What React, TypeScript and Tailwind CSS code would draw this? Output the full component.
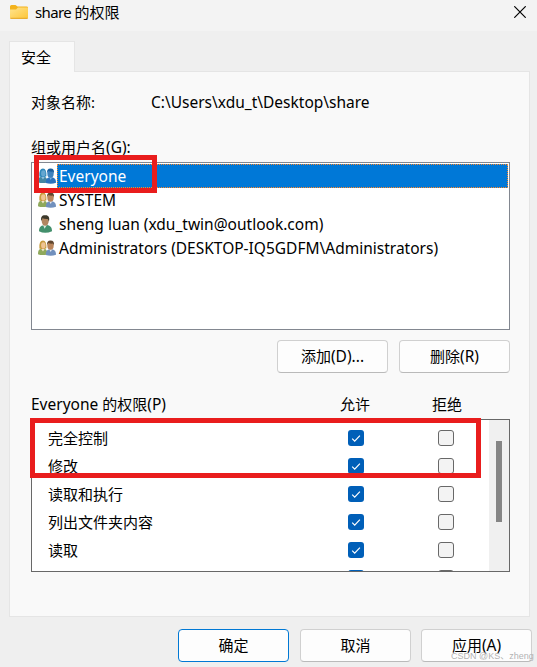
import React, { useState } from 'react';
import clsx from 'clsx';

interface Principal {
  name: string;
  kind: 'group' | 'user';
}

const principals: Principal[] = [
  { name: 'Everyone', kind: 'group' },
  { name: 'SYSTEM', kind: 'group' },
  { name: 'sheng luan (xdu_twin@outlook.com)', kind: 'user' },
  { name: 'Administrators (DESKTOP-IQ5GDFM\\Administrators)', kind: 'group' }
];

// the last row is scrolled almost out of view
const permissions = ['完全控制', '修改', '读取和执行', '列出文件夹内容', '读取', ''];

const FolderIcon = () => (
  <svg width="18" height="14" viewBox="0 0 18 14">
    <defs>
      <linearGradient id="folder" x1="0" y1="0" x2="1" y2="1">
        <stop offset="0" stopColor="#ffe48f" />
        <stop offset="1" stopColor="#fdc536" />
      </linearGradient>
    </defs>
    <path d="M0 1.5Q0 0 1.5 0H5.5L7.5 1.6H16.5Q18 1.6 18 3V6H0Z" fill="#f3b21b" />
    <path d="M0 4.4H6L8 2.6H17Q18 2.6 18 3.6V12.6Q18 14 16.6 14H1.4Q0 14 0 12.6Z" fill="url(#folder)" />
    <path d="M.4 13.3H17.6" stroke="#e3a52c" strokeWidth="1" />
  </svg>
);

const GroupIcon = ({ selected }: { selected: boolean }) => (
  <svg width="18" height="16" viewBox="0 0 18 16">
    <path d="M0 14.2C0 10 1.5 8.7 4.5 8.5C8 8.4 9.4 10.5 9.4 14.4Q4 15.8 0 14.2Z" fill={selected ? '#4387a3' : '#8fa95c'} />
    <path d="M3 8.8L5 11.5L6.8 8.8Z" fill={selected ? '#8dbfe0' : '#f2e3cb'} />
    <path d="M1.4 8.4Q.8 .6 5 .6Q8.7 .6 8.4 8.2L6.6 9H3Z" fill={selected ? '#2f88ba' : '#c79b3e'} />
    <ellipse cx="5.3" cy="5.4" rx="2.2" ry="3.1" fill={selected ? '#65a7d0' : '#efc493'} />
    <path d="M7.8 15C7.8 10.7 9.5 9.4 12.6 9.3C16.2 9.3 18 11 18 14.8Q13 16.4 7.8 15Z" fill={selected ? '#2b73bd' : '#7190bd'} />
    <path d="M11.2 9.3L12.7 12L14.2 9.3Z" fill={selected ? '#79b1e0' : '#e4e9ee'} />
    <ellipse cx="12.5" cy="5.4" rx="3.2" ry="4.3" fill={selected ? '#3d82bd' : '#b9855b'} />
    <path d="M9.2 5C8.6 1.9 10.2 .4 12.6 .5C15.3 .5 16.5 2.3 15.8 5.2L14.9 3.6Q12 3.8 10.2 3Z" fill={selected ? '#195e9d' : '#60462e'} />
  </svg>
);

const UserIcon = () => (
  <svg width="16" height="18" viewBox="0 0 16 18">
    <path d="M1 16.2C1 11.5 3.4 10.2 7.4 10C11.7 10 14 11.8 14 16.2Q7 19.2 1 16.2Z" fill="#43906c" />
    <path d="M5 9.8L6.5 13.8L9 9.8Z" fill="#dcebe2" />
    <ellipse cx="7.2" cy="6" rx="3.5" ry="4.8" fill="#b18660" />
    <path d="M3.4 6C2.3 2 4.2 0 7.2 .2C10.7 0 12 2.7 10.9 6.6L9.8 4Q6 4.2 4.6 3.2Z" fill="#3d3a2c" />
  </svg>
);

const Checkbox = ({ checked }: { checked: boolean }) =>
  checked ? (
    <div className="w-4 h-4 rounded-[3px] bg-[#005fb8] flex items-center justify-center">
      <svg width="16" height="16" viewBox="0 0 16 16" fill="none" stroke="#fff" strokeWidth="1.2">
        <path d="M4.2 8.6L6.7 11.1L11.9 5.6" />
      </svg>
    </div>
  ) : (
    <div className="w-4 h-4 rounded-[3px] border border-[#686868] bg-[#f3f3f3]" />
  );

interface DialogButtonProps {
  label: string;
  accessKey?: string;
  primary?: boolean;
}

const DialogButton: React.FC<DialogButtonProps> = ({ label, accessKey, primary }) => (
  <button
    className={clsx(
      'w-[111px] h-[33px] shrink-0 rounded-[4px] border bg-[#fdfdfd] pb-px',
      primary ? 'border-[#0078d4]' : 'border-[#d0d0d0] border-b-[#bababa]'
    )}
  >
    {label}
    {accessKey && <span className="text-[15.5px]">{accessKey}</span>}
  </button>
);

const App: React.FC = () => {
  const [selected, setSelected] = useState('Everyone');

  return (
    <div className="relative w-[537px] h-[667px] overflow-hidden bg-[#efefef] text-black text-[15px] leading-5 font-['Noto_Sans','Noto_Sans_CJK_SC',sans-serif]">
      <header className="h-[31px] bg-[#f3f3f3] flex items-start pl-2.5 pr-[11px]">
        <div className="mt-[5px]">
          <FolderIcon />
        </div>
        <h1 className="ml-[7px] mt-0.5">
          <span className="tracking-[-0.6px]">share </span>的权限
        </h1>
        <svg className="ml-auto mt-[6px]" width="12" height="12" viewBox="0 0 12 12" stroke="#000" strokeWidth="1.2">
          <path d="M.3 .3L11.7 11.7M11.7 .3L.3 11.7" />
        </svg>
      </header>

      <div className="pt-2.5 pl-[9px]">
        <div className="relative z-10 w-[66px] h-[31px] bg-[#f9f9f9] border border-b-0 border-[#e5e5e5] pl-[11px] pt-[5px]">安全</div>
        <main className="-mt-px w-[521px] h-[546px] bg-[#f9f9f9] border border-[#e5e5e5] pl-[21px] pt-5">
          <div className="flex h-5">
            <span className="w-[120px]">对象名称:</span>
            <span className="text-[15.5px]">C:\Users\xdu_t\Desktop\share</span>
          </div>

          <div className="mt-[25px] h-5">
            组或用户名<span className="text-[15.5px]">(G):</span>
          </div>

          <div className="relative mt-[5px] w-[479px] h-[168px] border border-[#828790] bg-white pt-px pl-[6px] pr-px">
            {principals.map((p) => (
              <div key={p.name} className="flex h-6" onClick={() => setSelected(p.name)}>
                <div className={clsx('w-[19px] shrink-0', p.kind === 'user' ? 'pt-[3px]' : 'pt-1')}>
                  {p.kind === 'user' ? <UserIcon /> : <GroupIcon selected={p.name === selected} />}
                </div>
                <div
                  className={clsx(
                    'flex-1 pl-px pt-px border border-dotted whitespace-nowrap text-[15.5px]',
                    p.name === selected ? 'bg-[#0078d7] text-white border-[#ff8728]' : 'border-transparent'
                  )}
                >
                  {p.name}
                </div>
              </div>
            ))}
            <div className="absolute left-[2px] top-[-8px] w-[123px] h-[38px] border-5 border-[#e91d1d]" />
          </div>

          <div className="mt-2.5 w-[479px] flex justify-end gap-[11px]">
            <DialogButton label="添加" accessKey="(D)..." />
            <DialogButton label="删除" accessKey="(R)" />
          </div>

          <div className="mt-[21px] flex h-5">
            <span className="w-[309px]">
              <span className="text-[15.5px]">Everyone </span>的权限<span className="text-[15.5px]">(P)</span>
            </span>
            <span className="w-[92px]">允许</span>
            <span>拒绝</span>
          </div>

          <div className="relative mt-[5px] w-[479px] h-[153px]">
            <div className="flex h-full border border-[#686868] bg-white overflow-hidden">
              <div className="w-[457px] pt-1">
                {permissions.map((name) => (
                  <div key={name} className="flex items-center h-7 pl-4">
                    <span className="w-[300px]">{name}</span>
                    <div className="w-[90px]">
                      <Checkbox checked />
                    </div>
                    <Checkbox checked={false} />
                  </div>
                ))}
              </div>
              <div className="flex-1 bg-[#f0f0f0] pt-[21px] pl-[7px]">
                <div className="w-1.5 h-[81px] bg-[#858585]" />
              </div>
            </div>
            <div className="absolute -left-px -top-px w-[451px] h-[60px] border-5 border-[#e91d1d]" />
          </div>
        </main>
      </div>

      <footer className="mt-3 pl-[178px] flex">
        <DialogButton label="确定" primary />
        <div className="ml-[11px] flex gap-2.5">
          <DialogButton label="取消" />
          <DialogButton label="应用" accessKey="(A)" />
        </div>
      </footer>

      <div className="absolute left-[451px] top-[649px] text-[9px] leading-[14px] whitespace-nowrap text-[#a9a9a9]/90 font-['Liberation_Sans','Noto_Sans_CJK_SC',sans-serif]">
        CSDN @KS、zheng
      </div>
    </div>
  );
};

export default App;
